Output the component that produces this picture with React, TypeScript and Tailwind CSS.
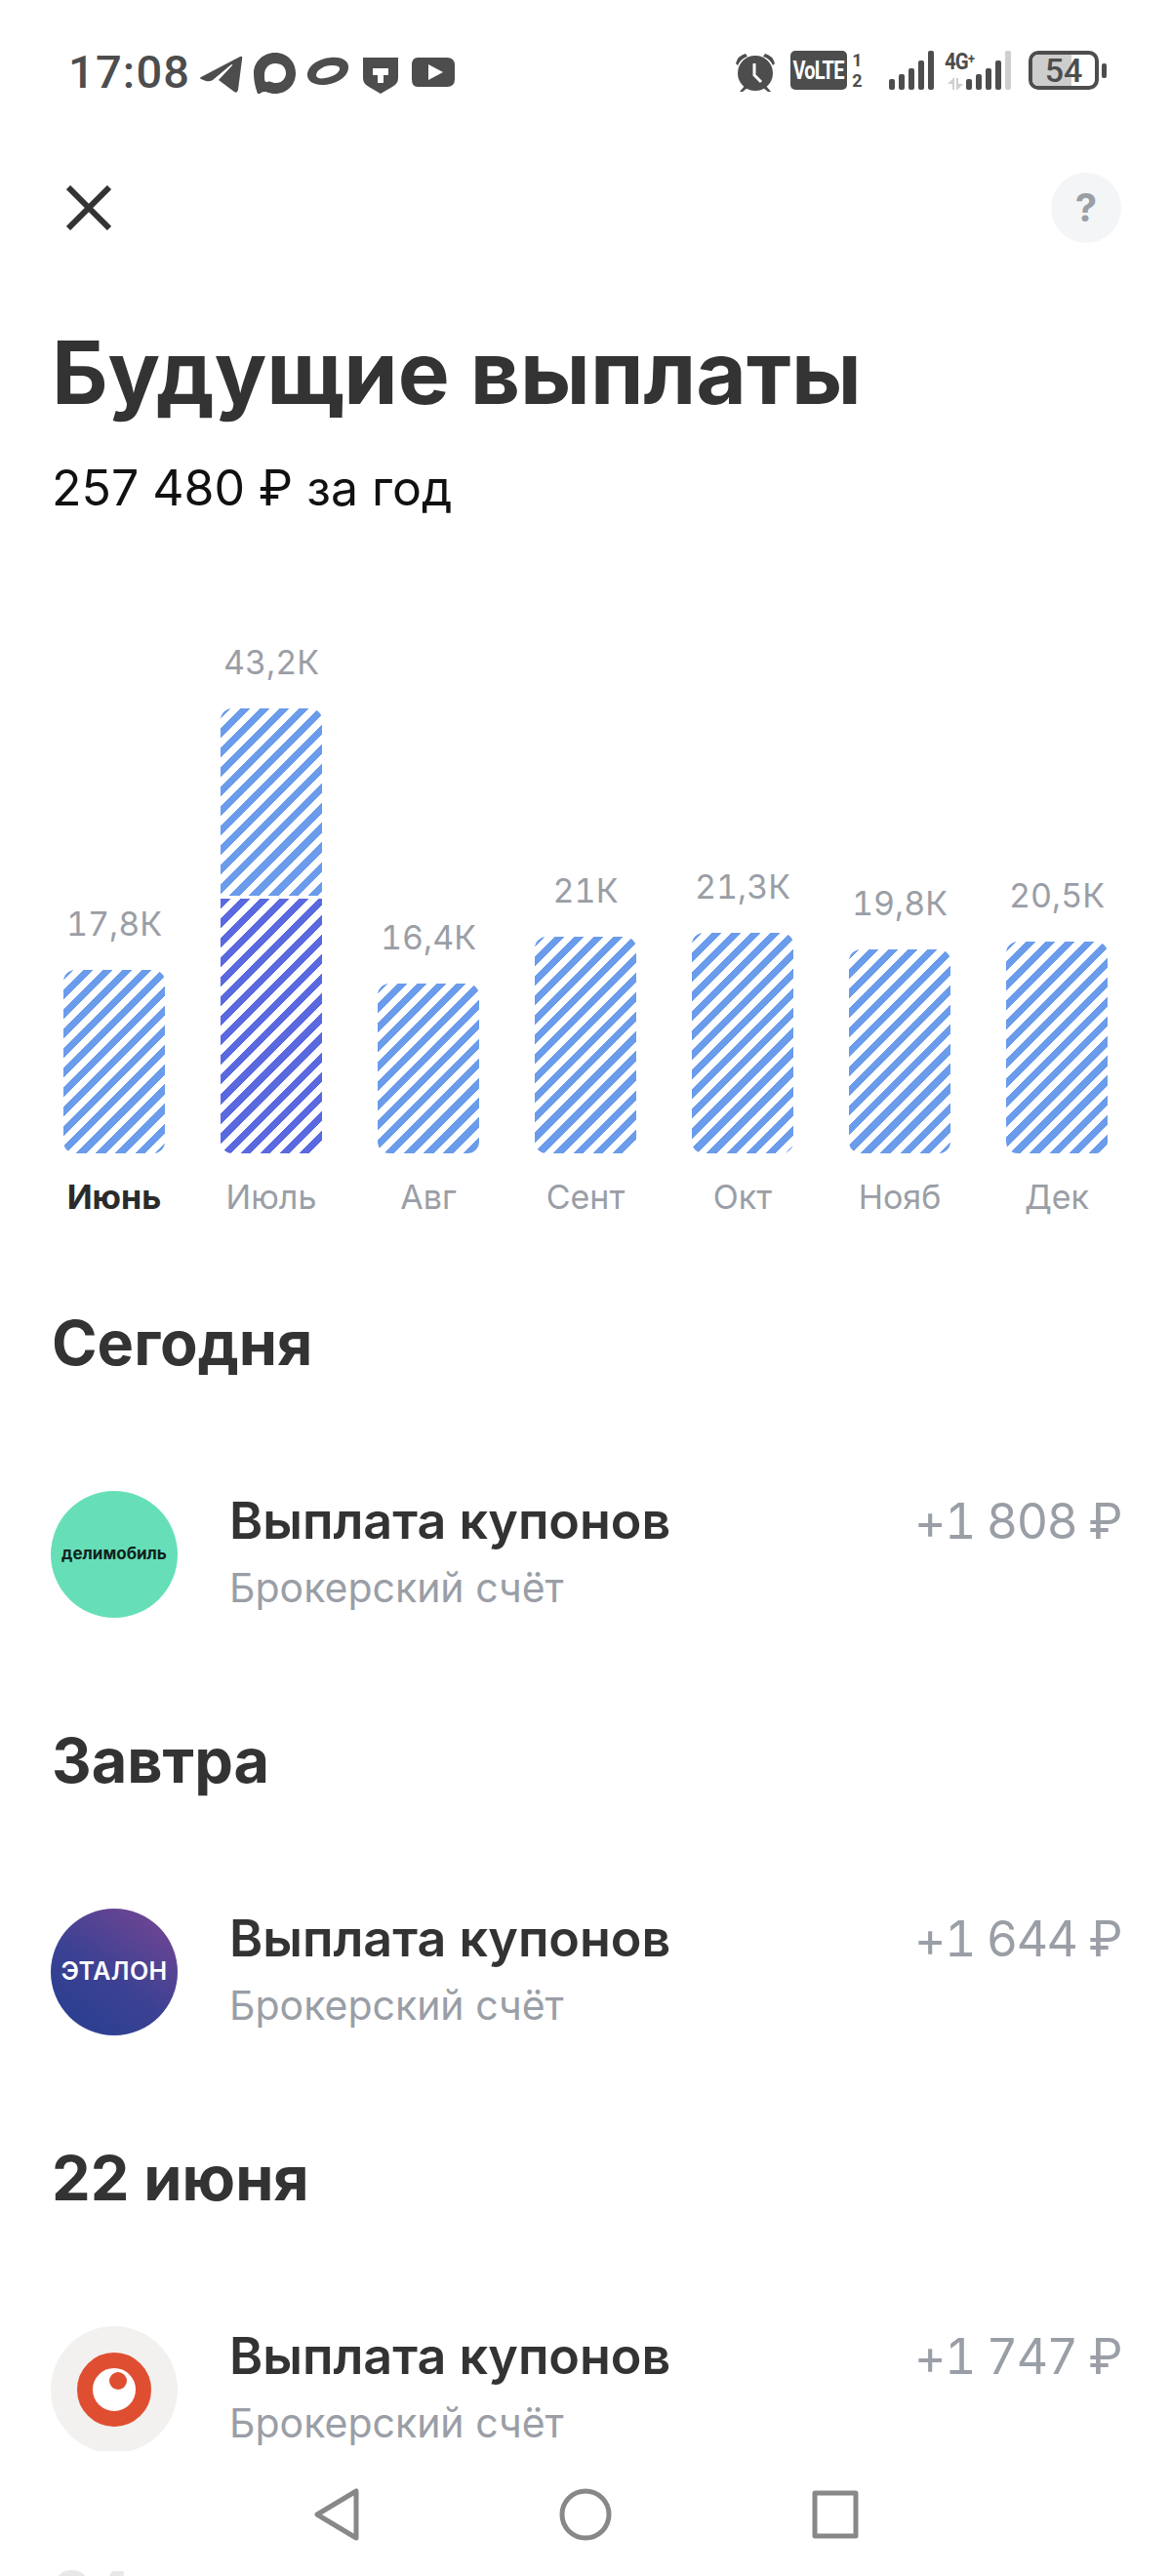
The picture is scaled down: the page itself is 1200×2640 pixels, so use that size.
import React from "react";

const SANS = "font-['Inter','Noto_Sans',sans-serif]";

type Bar = { value: string; month: string; height: number; paid?: number; active?: boolean };

const bars: Bar[] = [
  { value: "17,8К", month: "Июнь", height: 188, active: true },
  { value: "43,2К", month: "Июль", height: 456, paid: 261 },
  { value: "16,4К", month: "Авг", height: 174 },
  { value: "21К", month: "Сент", height: 222 },
  { value: "21,3К", month: "Окт", height: 226 },
  { value: "19,8К", month: "Нояб", height: 209 },
  { value: "20,5К", month: "Дек", height: 217 },
];

const lightStripes =
  "bg-[repeating-linear-gradient(135deg,#6b9ceb_0px,#6b9ceb_7.2px,#ffffff_7.2px,#ffffff_14.2px)]";
const darkStripes =
  "bg-[repeating-linear-gradient(135deg,#5a69df_0px,#5a69df_7.2px,#ffffff_7.2px,#ffffff_14.2px)]";

function StatusBar() {
  return (
    <div className="flex h-[177px] items-start pl-[70px] pr-[66px] pt-[50px] text-[#4d4d4d]">
      <span className="w-[131px] font-['Roboto',sans-serif] text-[47px] font-medium leading-[47px] tracking-[1.2px]">17:08</span>
      <svg width="264" height="44" viewBox="0 0 264 44" className="ml-[3px] mt-[2px]" fill="#4d4d4d">
        {/* telegram */}
        <path d="M2 27 L42 6 Q45 5 44 9 L40 40 Q39 44 36 42 L20 30 L34 15 Q35 13 32 15 L14 30 Q11 32 7 31 L2 29 Q0 28 2 27 Z" />
        {/* chat ring */}
        <path fillRule="evenodd" d="M78 2 C91 2 99 12 99 23 C99 35 90 44 78 44 C72 44 70 42 67 42 C63 42 63 45 60 44 C57 36 56 29 56 23 C56 12 65 2 78 2 Z M78 13 C71 13 67 18 67 25 C67 29 67 32 69 32 C71 32 71 31 74 32 C76 33 78 33 79 33 C85 33 89 28 89 23 C89 17 85 13 78 13 Z" />
        {/* oval ring */}
        <path fillRule="evenodd" d="M135 7 C147 6 154 11 153 18 C152 28 139 35 126 35 C116 35 110 30 111 23 C113 14 123 8 135 7 Z M136 15 C128 15 120 20 120 25 C120 28 124 29 129 28 C137 27 145 22 144 18 C144 16 141 15 136 15 Z" />
        {/* shield */}
        <path fillRule="evenodd" d="M168 7 H204 V28 Q204 34 198 37 L186 44 L174 37 Q168 34 168 28 Z M178 18 V25 H183 V33 H189 V25 H194 V18 Z" />
        {/* youtube */}
        <path fillRule="evenodd" d="M224 7 H254 Q262 7 262 15 V29 Q262 37 254 37 H224 Q218 37 218 29 V15 Q218 7 224 7 Z M235 14 V30 L250 22 Z" />
      </svg>
      <div className="ml-auto flex items-start">
        <svg width="42" height="42" viewBox="0 0 42 42" className="mt-[3px]" fill="#4d4d4d">
          <circle cx="21" cy="22" r="18" />
          <path d="M1 12 Q3 4 11 2 L13 5 Q6 7 3 14 Z M41 12 Q39 4 31 2 L29 5 Q36 7 39 14 Z" />
          <path d="M5 41 L10 35 L13 37 L8 41 Z M37 41 L32 35 L29 37 L34 41 Z" />
          <path d="M20 12 V24 L27 31" stroke="#fff" strokeWidth="3" fill="none" />
        </svg>
        <div className="ml-[15px] mt-[2px] flex h-[40px] w-[58px] items-center justify-center rounded-[5px] bg-[#4d4d4d]">
          <span className="scale-x-[0.8] font-['Roboto',sans-serif] text-[25px] font-bold leading-none tracking-[-1px] text-white">VoLTE</span>
        </div>
        <div className="ml-[5px] mt-[1px] flex w-[11px] flex-col items-center font-['Roboto',sans-serif] text-[18px] font-bold leading-[21px]">
          <span>1</span>
          <span>2</span>
        </div>
        <svg width="46" height="40" viewBox="0 0 46 40" className="ml-[27px] mt-[2px]" fill="#4d4d4d">
          <rect x="0" y="29" width="6" height="11" rx="2" />
          <rect x="10" y="24" width="6" height="16" rx="2" />
          <rect x="20" y="18" width="6" height="22" rx="2" />
          <rect x="30" y="10" width="6" height="30" rx="2" />
          <rect x="40" y="0" width="6" height="40" rx="2" />
        </svg>
        <div className="relative ml-[11px] mt-[2px] h-[40px] w-[70px]">
          <span className="absolute left-0 top-[-2px] origin-left scale-x-[0.85] font-['Roboto',sans-serif] text-[24px] font-bold leading-[26px] tracking-[-1px]">
            4G<span className="relative top-[-6px] text-[15px]">+</span>
          </span>
          <svg width="70" height="40" viewBox="0 0 70 40" className="absolute left-0 top-0">
            <path d="M3 34 L10 27 V40 H8 V34 Z M12 28 H14 V34 L19 34 L12 41 Z" fill="#cfcfcf" />
            <g fill="#4d4d4d">
              <rect x="22" y="29" width="6" height="11" rx="2" />
              <rect x="32" y="24" width="6" height="16" rx="2" />
              <rect x="42" y="18" width="6" height="22" rx="2" />
              <rect x="52" y="10" width="6" height="30" rx="2" />
            </g>
            <rect x="62" y="0" width="6" height="40" rx="2" fill="#cfcfcf" />
          </svg>
        </div>
        <div className="relative ml-[16px] mt-[2px] h-[40px] w-[72px] overflow-hidden rounded-[10px] border-[4px] border-[#4d4d4d]">
          <div className="h-full w-[40px] bg-[#cdcdcd]" />
          <span className="absolute inset-0 text-center font-['Roboto',sans-serif] text-[34px] font-medium leading-[32px]">54</span>
        </div>
        <div className="ml-[3px] mt-[15px] h-[15px] w-[5px] rounded-[2px] bg-[#4d4d4d]" />
      </div>
    </div>
  );
}

function Header() {
  return (
    <div className="flex items-center justify-between pl-[68px] pr-[51px]">
      <svg width="46" height="46" viewBox="0 0 46 46" stroke="#333333" strokeWidth="6" fill="none">
        <path d="M2 2 L44 44 M44 2 L2 44" />
      </svg>
      <div className={`flex h-[72px] w-[72px] items-center justify-center rounded-full bg-[#f4f5f6] text-[40px] font-bold leading-none text-[#9a9ea6] ${SANS}`}>?</div>
    </div>
  );
}

function Chart() {
  return (
    <div className="mt-[196px] flex h-[456px] items-end gap-[57px] pl-[65px]">
      {bars.map((bar) => (
        <div key={bar.month} className="relative w-[104px]">
          <div className={`absolute bottom-full left-[-20px] right-[-20px] mb-[25px] whitespace-nowrap text-center text-[34px] leading-[44px] tabular-nums text-[#9a9ea6] ${SANS}`}>
            {bar.value}
          </div>
          <div className="flex flex-col overflow-hidden rounded-[12px]">
            {bar.paid ? (
              <>
                <div className={lightStripes} style={{ height: bar.height - bar.paid - 3 }} />
                <div className={`mt-[3px] ${darkStripes}`} style={{ height: bar.paid }} />
              </>
            ) : (
              <div className={lightStripes} style={{ height: bar.height }} />
            )}
          </div>
        </div>
      ))}
    </div>
  );
}

function Months() {
  return (
    <div className="mt-[23px] flex gap-[57px] pl-[65px]">
      {bars.map((bar) => (
        <div
          key={bar.month}
          className={`-mx-[10px] w-[124px] text-center text-[34px] leading-[44px] ${SANS} ${bar.active ? "font-bold text-[#2b2b2b]" : "text-[#9a9ea6]"}`}
        >
          {bar.month}
        </div>
      ))}
    </div>
  );
}

function Heading({ children }: { children: React.ReactNode }) {
  return <h2 className={`pl-[53px] text-[63px] font-bold leading-[76px] text-[#333333] ${SANS}`}>{children}</h2>;
}

function Row({ logo, amount }: { logo: React.ReactNode; amount: string }) {
  return (
    <div className="flex items-start pl-[52px] pr-[51px]">
      {logo}
      <div className="ml-[53px] flex-1 pt-[1px]">
        <div className={`text-[52px] font-semibold leading-[60px] text-[#333333] ${SANS}`}>Выплата купонов</div>
        <div className={`mt-[14px] text-[41px] leading-[48px] text-[#9a9ea6] ${SANS}`}>Брокерский счёт</div>
      </div>
      <div className={`pt-[1px] text-[50px] leading-[60px] tracking-[-1.5px] tabular-nums text-[#9a9ea6] ${SANS}`}>{amount}</div>
    </div>
  );
}

export default function App() {
  return (
    <div className="relative h-[2640px] w-[1200px] overflow-hidden bg-white">
      <div className="h-[2512px] overflow-hidden">
        <StatusBar />
        <Header />
        <h1 className={`mt-[83px] pl-[53px] text-[89px] font-bold leading-[100px] text-[#333333] ${SANS}`}>Будущие выплаты</h1>
        <div className={`mt-[38px] pl-[53px] text-[50px] leading-[60px] text-[#111111] ${SANS}`}>257 480 ₽ за год</div>
        <Chart />
        <Months />
        <div className="mt-[89px]">
          <Heading>Сегодня</Heading>
        </div>
        <div className="mt-[114px]">
          <Row
            amount="+1 808 ₽"
            logo={
              <div className="flex h-[130px] w-[130px] shrink-0 items-center justify-center rounded-full bg-[#66dfb8]">
                <span className={`text-[17px] font-bold text-[#10231d] ${SANS}`}>делимобиль</span>
              </div>
            }
          />
        </div>
        <div className="mt-[108px]">
          <Heading>Завтра</Heading>
        </div>
        <div className="mt-[114px]">
          <Row
            amount="+1 644 ₽"
            logo={
              <div className="flex h-[130px] w-[130px] shrink-0 items-center justify-center rounded-full bg-[linear-gradient(215deg,#6f4593_10%,#3b4193_55%,#2b3f90_90%)]">
                <span className={`text-[25px] font-semibold tracking-[0.4px] text-white ${SANS}`}>ЭТАЛОН</span>
              </div>
            }
          />
        </div>
        <div className="mt-[108px]">
          <Heading>22 июня</Heading>
        </div>
        <div className="mt-[114px]">
          <Row
            amount="+1 747 ₽"
            logo={
              <div className="flex h-[130px] w-[130px] shrink-0 items-center justify-center rounded-full bg-[#f2f1ef]">
                <div className="relative h-[76px] w-[76px] rounded-full border-[16px] border-[#e04e32] bg-white">
                  <div className="absolute left-[17px] top-[4px] h-[18px] w-[18px] rounded-full bg-[#e04e32]" />
                </div>
              </div>
            }
          />
        </div>
      </div>
      <div className="flex h-[108px] items-start pl-[322px] pt-[38px]">
        <svg width="46" height="54" viewBox="0 0 46 54" fill="none" stroke="#888888" strokeWidth="5" strokeLinejoin="round">
          <path d="M43 3 V51 L3 27 Z" />
        </svg>
        <svg width="54" height="54" viewBox="0 0 54 54" fill="none" stroke="#888888" strokeWidth="5" className="ml-[205px]">
          <circle cx="27" cy="27" r="24" />
        </svg>
        <svg width="48" height="50" viewBox="0 0 48 50" fill="none" stroke="#888888" strokeWidth="5" strokeLinejoin="round" className="ml-[205px] mt-[2px]">
          <rect x="3" y="3" width="42" height="44" />
        </svg>
      </div>
      <div className={`pl-[54px] text-[63px] font-bold leading-[76px] text-[#e8e8e8] ${SANS}`}>24 июня</div>
    </div>
  );
}
